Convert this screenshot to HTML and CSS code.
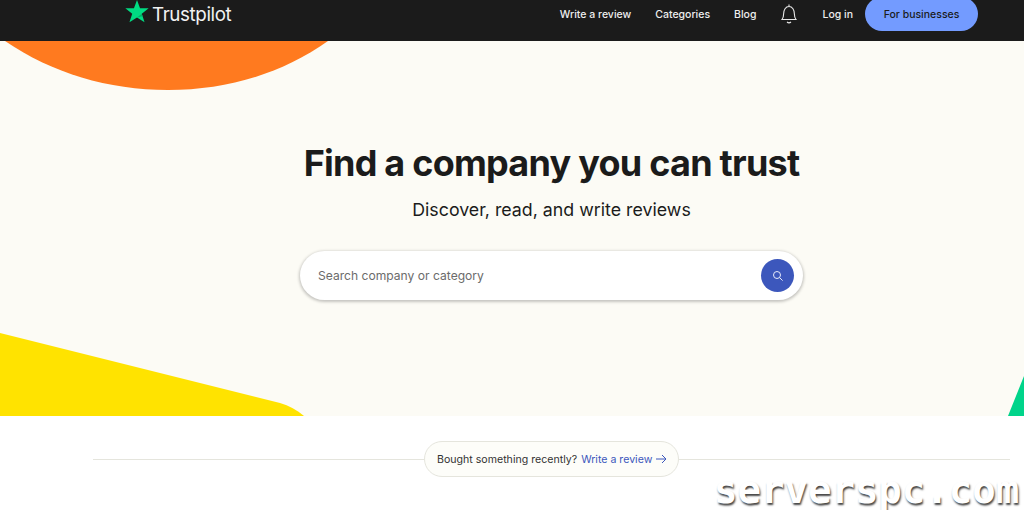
FILE: index.html
```html
<!DOCTYPE html>
<html lang="en">
<head>
<meta charset="utf-8">
<title>Trustpilot</title>
<link rel="stylesheet" href="styles.css">
</head>
<body>
<header class="topbar">
  <a class="logo" href="#">
    <svg class="logo-star" viewBox="0 0 26 25" aria-hidden="true"><path fill="#00dc82" d="M13 0l3.300 9h9.400l-7.500 6 3 9.300-8.200-5.400-8.200 5.400 3-9.300-7.500-6h9.400z"/><path fill="#00ad68" d="M18.200 15l.8 2.700-6 1.200z"/></svg>
    <span class="logo-text">Trustpilot</span>
  </a>
  <nav class="nav">
    <a class="nav-link" href="#">Write a review</a>
    <a class="nav-link" href="#">Categories</a>
    <a class="nav-link" href="#">Blog</a>
    <svg class="bell" viewBox="0 0 18 20" aria-hidden="true"><path fill="none" stroke="#e8e8e8" stroke-width="1.100" d="M2 15.500c1.300-1.500 1.600-2.800 1.600-5.500 0-4 2-7.500 5.400-7.500s5.400 3.500 5.400 7.500c0 2.700.3 4 1.600 5.500zM7 18c1.200 1 2.800 1 4 0M9 .5v2"/></svg>
    <a class="nav-link" href="#">Log in</a>
    <a class="cta" href="#">For businesses</a>
  </nav>
</header>
<main>
  <section class="hero">
    <svg class="shape shape-orange" viewBox="0 0 340 50" aria-hidden="true"><path fill="#ff7a1f" d="M5 0h323C283 32 228 49 168 49S52 32 5 0z"/></svg>
    <svg class="shape shape-yellow" viewBox="0 0 306 83" aria-hidden="true"><path fill="#ffe300" d="M0 0l280 70c9 2.500 17 7 24 13H0z"/></svg>
    <svg class="shape shape-green" viewBox="0 0 16 40" aria-hidden="true"><path fill="#00d48a" d="M16 0v40H0z"/></svg>
    <div class="hero-content">
      <h1 class="title">Find a company you can trust</h1>
      <p class="subtitle">Discover, read, and write reviews</p>
      <form class="search">
        <span class="placeholder">Search company or category</span>
        <span class="search-btn">
          <svg class="search-icon" viewBox="0 0 12 12" aria-hidden="true"><circle cx="5" cy="5" r="3.500" fill="none" stroke="#e6eafa" stroke-width="1"/><path d="M7.600 7.600l3 3" stroke="#e6eafa" stroke-width="1"/></svg>
        </span>
      </form>
    </div>
  </section>
  <section class="prompt-row">
    <span class="rule"></span>
    <div class="prompt">
      <span>Bought something recently?</span>
      <a class="prompt-link" href="#">Write a review</a>
      <svg class="arrow" viewBox="0 0 11 10" aria-hidden="true"><path fill="none" stroke="#3c57bc" stroke-width="1" d="M0 5h10M6 1l4 4-4 4"/></svg>
    </div>
    <span class="rule"></span>
  </section>
</main>
<div class="watermark">serverspc.com</div>
</body>
</html>
```
FILE: styles.css
```css
* { box-sizing: border-box; }
html, body { margin: 0; height: 510px; overflow: hidden; background: #fff; }
body { font-family: Inter, "Noto Sans", sans-serif; color: #1b1b1b; position: relative; }
a { text-decoration: none; color: inherit; }

.topbar {
  height: 41px;
  background: #1b1b1b;
  display: flex;
  justify-content: space-between;
  align-items: flex-end;
  padding: 0 46px 10px 125px;
  overflow: hidden;
}
.logo { display: flex; align-items: flex-end; gap: 3px; align-self: flex-start; color: #f2f2f2; height: 26px; }
.logo-star { width: 24px; height: 23px; display: block; margin-bottom: 3px; }
.logo-text { font-size: 18.800px; font-weight: 400; letter-spacing: -0.4px; line-height: 22px; margin-top: 5px; }
.nav { display: flex; align-items: center; color: #eee; font-size: 10.500px; font-weight: 500; height: 34px; }
.nav-link { white-space: nowrap; margin-right: 24px; }
.bell { width: 18px; height: 20px; margin-right: 24px; }
.nav-link:nth-of-type(4) { margin-right: 12px; }
.cta {
  display: flex;
  align-items: center;
  justify-content: center;
  width: 113px;
  height: 34px;
  background: #739bff;
  color: #1b1b1b;
  border-radius: 17px;
}

.hero {
  position: relative;
  height: 375px;
  background: #fcfbf5;
  overflow: hidden;
  padding: 102px 0 0 79px;
}
.shape { position: absolute; display: block; }
.shape-orange { left: 0; top: 0; width: 340px; height: 50px; }
.shape-yellow { left: 0; bottom: 0; width: 306px; height: 83px; }
.shape-green { right: 0; bottom: 0; width: 16px; height: 40px; }
.hero-content { position: relative; display: flex; flex-direction: column; align-items: center; }
.title { margin: 0; font-size: 36px; line-height: 40px; font-weight: 700; letter-spacing: -0.76px; white-space: nowrap; }
.subtitle { margin: 16px 0 0; font-size: 17.800px; line-height: 22px; font-weight: 400; }
.search {
  width: 503px;
  height: 49px;
  margin-top: 30px;
  background: #fff;
  border-radius: 25px;
  box-shadow: 0 1px 3px 1px rgba(0,0,0,.22);
  display: flex;
  align-items: center;
  justify-content: space-between;
  padding: 0 9px 0 18px;
}
.placeholder { font-size: 12.100px; color: #6b6b6b; }
.search-btn { width: 33px; height: 33px; border-radius: 50%; background: #3c57bc; display: flex; align-items: center; justify-content: center; }
.search-icon { width: 12px; height: 12px; }

.prompt-row { display: flex; align-items: center; padding: 25px 14px 0 93px; }
.rule { flex: 1; height: 1px; background: #e5e5dd; }
.prompt {
  display: flex;
  align-items: center;
  width: 255px;
  height: 36px;
  padding-left: 12px;
  border: 1px solid #e5e5dd;
  border-radius: 18px;
  background: #fdfdf9;
  font-size: 10.600px;
  color: #333;
  white-space: nowrap;
}
.prompt-link { margin-left: 4px; color: #3c57bc; }
.arrow { width: 11px; height: 10px; margin-left: 4px; }

.watermark {
  position: absolute;
  left: 714px;
  top: 470px;
  font-family: "DejaVu Sans Mono", monospace;
  font-size: 39px;
  font-weight: 700;
  line-height: 40px;
  color: #fff;
  text-shadow: 1px 2px 2px #444;
  white-space: nowrap;
}
```
